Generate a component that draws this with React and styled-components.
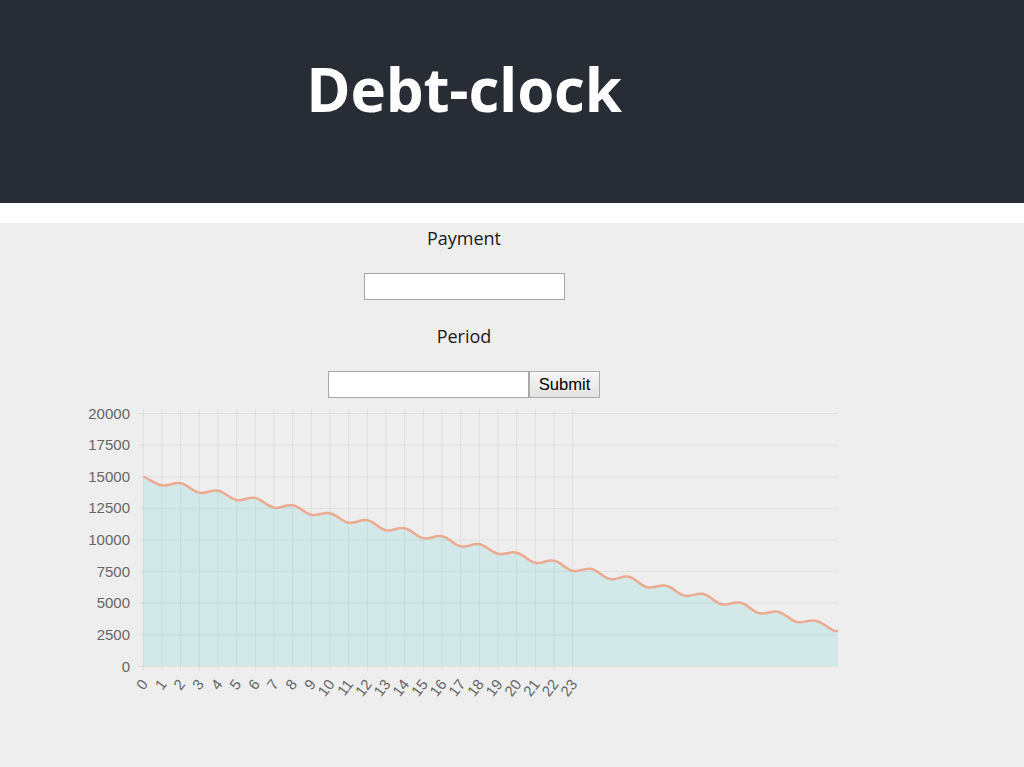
import styled, { createGlobalStyle } from "styled-components";

const GlobalStyle = createGlobalStyle`
  html, body {
    margin: 0;
    padding: 0;
    background: #ffffff;
    font-family: "Open Sans", "Noto Sans", sans-serif;
  }
`;

// debt balance per month, read off the chart
const balances = [
  15000, 14285, 14443, 13700, 13858, 13122, 13280, 12514, 12703, 11960, 12071,
  11328, 11518, 10727, 10885, 10095, 10253, 9462, 9620, 8877, 8957, 8166, 8324,
  7534, 7668, 6877, 7059, 6221, 6348, 5557, 5692, 4877, 5004, 4166, 4292, 3478,
  3581, 2767,
];
const labelCount = 24;

// chart geometry (svg coordinates)
const X0 = 143.3;
const DX = 18.67;
const XEND = 838;
const YBOTTOM = 261;
const YTOP = 8;
const MAX = 20000;

const toY = (v) => YBOTTOM - (v / MAX) * (YBOTTOM - YTOP);

function splinePath(values) {
  const pts = values.map((v, i) => ({ x: X0 + i * DX, y: toY(v) }));
  const t = 0.4;
  const cps = pts.map((cur, i) => {
    const prev = pts[i - 1] || cur;
    const next = pts[i + 1] || cur;
    const d01 = Math.hypot(cur.x - prev.x, cur.y - prev.y);
    const d12 = Math.hypot(next.x - cur.x, next.y - cur.y);
    const sum = d01 + d12 || 1;
    const fa = (t * d01) / sum;
    const fb = (t * d12) / sum;
    return {
      px: cur.x - fa * (next.x - prev.x),
      py: cur.y - fa * (next.y - prev.y),
      nx: cur.x + fb * (next.x - prev.x),
      ny: cur.y + fb * (next.y - prev.y),
    };
  });
  let d = `M ${pts[0].x} ${pts[0].y}`;
  for (let i = 1; i < pts.length; i++) {
    d += ` C ${cps[i - 1].nx} ${cps[i - 1].ny} ${cps[i].px} ${cps[i].py} ${pts[i].x} ${pts[i].y}`;
  }
  d += ` L ${XEND} ${pts[pts.length - 1].y}`;
  return d;
}

function DebtChart() {
  const line = splinePath(balances);
  const area = `${line} L ${XEND} ${YBOTTOM} L ${X0} ${YBOTTOM} Z`;
  const yTicks = [];
  for (let v = 0; v <= MAX; v += 2500) yTicks.push(v);
  const xTicks = Array.from({ length: labelCount }, (_, i) => i);

  return (
    <ChartBox>
      <svg width="928" height="310" viewBox="0 0 928 310">
        {yTicks.map((v) => (
          <line
            key={`h${v}`}
            x1={138}
            x2={XEND}
            y1={toY(v) + 0.5}
            y2={toY(v) + 0.5}
            stroke="rgba(0,0,0,0.06)"
            strokeWidth="1"
          />
        ))}
        {xTicks.map((i) => (
          <line
            key={`v${i}`}
            x1={X0 + i * DX}
            x2={X0 + i * DX}
            y1={4}
            y2={YBOTTOM + 5}
            stroke="rgba(0,0,0,0.06)"
            strokeWidth="1"
          />
        ))}
        <path d={area} fill="rgba(80,200,200,0.17)" />
        <path
          d={line}
          fill="none"
          stroke="#ecaa91"
          strokeWidth="2.5"
          strokeLinejoin="round"
        />
        {yTicks.map((v) => (
          <AxisText
            key={`yl${v}`}
            x={130}
            y={toY(v)}
            textAnchor="end"
            dominantBaseline="central"
          >
            {v}
          </AxisText>
        ))}
        {xTicks.map((i) => {
          const x = X0 + i * DX + 1;
          const y = YBOTTOM + 15;
          return (
            <AxisText
              key={`xl${i}`}
              x={x}
              y={y}
              textAnchor="end"
              dominantBaseline="central"
              transform={`rotate(-52 ${x} ${y})`}
            >
              {i}
            </AxisText>
          );
        })}
      </svg>
    </ChartBox>
  );
}

export default function App() {
  return (
    <>
      <GlobalStyle />
      <Header>
        <Title>Debt-clock</Title>
      </Header>
      <Main>
        <Form onSubmit={(e) => e.preventDefault()}>
          <Label>Payment</Label>
          <Field>
            <TextInput type="text" />
          </Field>
          <Label>Period</Label>
          <Field>
            <TextInput type="text" />
            <SubmitButton type="submit">Submit</SubmitButton>
          </Field>
        </Form>
        <DebtChart />
      </Main>
    </>
  );
}

const Header = styled.header`
  background: #282c34;
  height: 203px;
  margin-bottom: 20px;
`;

const Title = styled.h1`
  width: 928px;
  margin: 0;
  padding-top: 49px;
  text-align: center;
  color: #ffffff;
  font-family: "Open Sans", "Noto Sans", sans-serif;
  font-weight: 700;
  font-size: 60px;
  line-height: 80px;
  letter-spacing: -0.2px;
`;

const Main = styled.main`
  background: #eeeeee;
  min-height: calc(100vh - 223px);
  width: 100%;
`;

const Form = styled.form`
  width: 928px;
  display: flex;
  flex-direction: column;
  align-items: center;
  padding-top: 3px;
`;

const Label = styled.div`
  font-size: 18px;
  line-height: 24px;
  color: #1a1a1a;
  margin-bottom: 23px;
`;

const Field = styled.div`
  display: flex;
  margin-bottom: 24px;

  &:last-child {
    margin-bottom: 0;
  }
`;

const TextInput = styled.input`
  box-sizing: border-box;
  width: 201px;
  height: 27px;
  border: 1px solid #a6a6a6;
  background: #ffffff;
  padding: 1px 3px;
  font-size: 16px;
  outline: none;
`;

const SubmitButton = styled.button`
  box-sizing: border-box;
  width: 71px;
  height: 27px;
  border: 1px solid #adadad;
  background: linear-gradient(#f6f6f6, #e3e3e3);
  font-family: "Liberation Sans", Arial, sans-serif;
  font-size: 16.6px;
  color: #000000;
  padding: 0;
`;

const ChartBox = styled.div`
  width: 928px;
  margin-top: 7px;
  line-height: 0;
`;

const AxisText = styled.text`
  font-family: "Liberation Sans", Arial, sans-serif;
  font-size: 15px;
  fill: #666666;
`;
